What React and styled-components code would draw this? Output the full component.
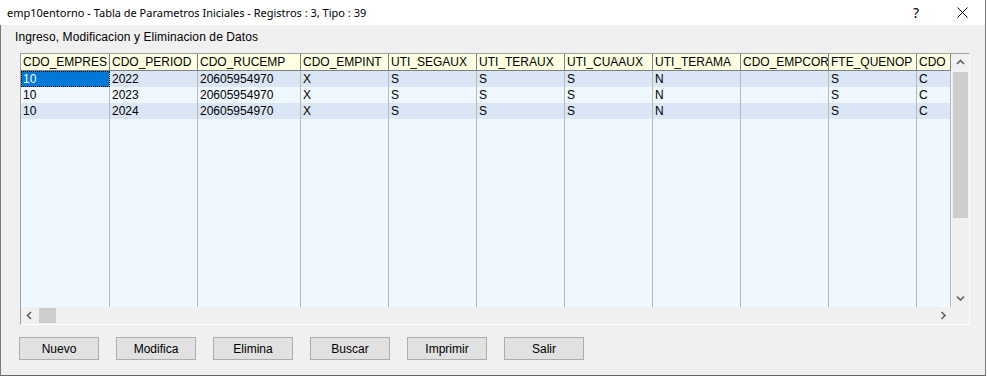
import React from 'react'
import styled, { createGlobalStyle } from 'styled-components'

const GlobalStyle = createGlobalStyle`
  body {
    margin: 0;
    background: #ffffff;
    font-family: "Liberation Sans", Arial, sans-serif;
  }
  * { box-sizing: border-box; }
`

const columns = [
  { name: 'CDO_EMPRES', width: 89 },
  { name: 'CDO_PERIOD', width: 88 },
  { name: 'CDO_RUCEMP', width: 103 },
  { name: 'CDO_EMPINT', width: 88 },
  { name: 'UTI_SEGAUX', width: 88 },
  { name: 'UTI_TERAUX', width: 88 },
  { name: 'UTI_CUAAUX', width: 88 },
  { name: 'UTI_TERAMA', width: 88 },
  { name: 'CDO_EMPCOR', width: 88 },
  { name: 'FTE_QUENOP', width: 88 },
  { name: 'CDO', width: 34 },
]

const rows = [
  ['10', '2022', '20605954970', 'X', 'S', 'S', 'S', 'N', '', 'S', 'C'],
  ['10', '2023', '20605954970', 'X', 'S', 'S', 'S', 'N', '', 'S', 'C'],
  ['10', '2024', '20605954970', 'X', 'S', 'S', 'S', 'N', '', 'S', 'C'],
]

const buttons = ['Nuevo', 'Modifica', 'Elimina', 'Buscar', 'Imprimir', 'Salir']

const Window = styled.div`
  width: 986px;
  height: 376px;
  display: flex;
  flex-direction: column;
  border-right: 1px solid #7a7a7a;
`

const TitleBar = styled.div`
  height: 25px;
  flex-shrink: 0;
  background: #ffffff;
  display: flex;
  align-items: center;
  padding-left: 7px;
  font-family: "Noto Sans", "Open Sans", sans-serif;
  font-size: 11px;
  color: #000;
`

const TitleText = styled.span`
  flex: 1;
  white-space: nowrap;
`

const CaptionButton = styled.div`
  width: 46px;
  height: 25px;
  display: flex;
  align-items: center;
  justify-content: center;
  font-family: "Noto Sans", sans-serif;
  font-size: 14px;
  color: #000;
`

const Body = styled.div`
  flex: 1;
  background: #f0f0f0;
  border-left: 1px solid #7a7a7a;
  border-bottom: 1px solid #646464;
  padding-top: 4px;
  display: flex;
  flex-direction: column;
`

const GroupLabel = styled.div`
  margin-left: 14px;
  height: 16px;
  line-height: 16px;
  font-size: 12px;
  letter-spacing: 0.1px;
  color: #000;
`

const GridFrame = styled.div`
  margin: 8px 0 0 19px;
  width: 950px;
  height: 272px;
  border-top: 1px solid #a0a0a0;
  border-left: 1px solid #a0a0a0;
  border-right: 1px solid #ffffff;
  border-bottom: 1px solid #ffffff;
  display: flex;
  flex-direction: column;
`

const GridMain = styled.div`
  display: flex;
  height: 253px;
`

const DataArea = styled.div`
  width: 931px;
  display: flex;
  overflow: hidden;
  background: #f0f8ff;
`

const Column = styled.div`
  width: ${(p) => p.$width}px;
  flex-shrink: 0;
  display: flex;
  flex-direction: column;
`

const HeaderCell = styled.div`
  height: 17px;
  line-height: 16px;
  padding-left: 2px;
  background: #ffffe1;
  border-right: 1px solid #808080;
  border-bottom: 1px solid #808080;
  box-shadow: inset 1px 0 0 #ffffff;
  font-size: 12px;
  color: #000;
  white-space: nowrap;
  overflow: hidden;
`

const Cell = styled.div`
  height: 16px;
  line-height: 16px;
  padding-left: 2px;
  font-size: 12px;
  white-space: nowrap;
  overflow: hidden;
  border-right: 1px solid #b9b9b9;
  background: ${(p) => (p.$selected ? '#0078d7' : p.$row % 2 === 0 ? '#dae5f6' : '#f0f8ff')};
  color: ${(p) => (p.$selected ? '#ffffff' : '#000000')};
  outline: ${(p) => (p.$selected ? '1px dotted #000' : 'none')};
  outline-offset: -1px;
`

const Filler = styled.div`
  flex: 1;
  border-right: 1px solid #b9b9b9;
`

const VScroll = styled.div`
  width: 17px;
  background: #f0f0f0;
  display: flex;
  flex-direction: column;
`

const ArrowBox = styled.div`
  width: 17px;
  height: 17px;
  flex-shrink: 0;
  display: flex;
  align-items: center;
  justify-content: center;
`

const VThumb = styled.div`
  margin: 1px 1px 0 1px;
  height: 146px;
  background: #cdcdcd;
`

const VTrack = styled.div`
  flex: 1;
`

const HScroll = styled.div`
  height: 17px;
  display: flex;
  background: #f0f0f0;
`

const HTrack = styled.div`
  width: 931px;
  display: flex;
  align-items: stretch;
`

const HThumb = styled.div`
  width: 17px;
  margin: 1px 0 1px 1px;
  background: #cdcdcd;
`

const HSpace = styled.div`
  flex: 1;
`

const ButtonRow = styled.div`
  margin: 12px 0 0 18px;
  display: flex;
  gap: 17px;
`

const Button = styled.button`
  width: 80px;
  height: 23px;
  padding: 0;
  background: #e1e1e1;
  border: 1px solid #adadad;
  font-family: "Liberation Sans", Arial, sans-serif;
  font-size: 12px;
  color: #000;
`

const Chevron = ({ dir }) => {
  const pts = {
    up: '1,5 4.5,1.5 8,5',
    down: '1,1.5 4.5,5 8,1.5',
    left: '5,1 1.5,4.5 5,8',
    right: '1.5,1 5,4.5 1.5,8',
  }[dir]
  const vertical = dir === 'up' || dir === 'down'
  return (
    <svg width={vertical ? 9 : 7} height={vertical ? 7 : 9} viewBox={vertical ? '0 0 9 7' : '0 0 7 9'}>
      <polyline points={pts} fill="none" stroke="#606060" strokeWidth="1.6" />
    </svg>
  )
}

export default function App() {
  return (
    <>
      <GlobalStyle />
      <Window>
        <TitleBar>
          <TitleText>emp10entorno - Tabla de Parametros Iniciales - Registros : 3, Tipo : 39</TitleText>
          <CaptionButton>?</CaptionButton>
          <CaptionButton>
            <svg width="11" height="11" viewBox="0 0 11 11">
              <path d="M0.5 0.5 L10.5 10.5 M10.5 0.5 L0.5 10.5" stroke="#000" strokeWidth="1" />
            </svg>
          </CaptionButton>
        </TitleBar>
        <Body>
          <GroupLabel>Ingreso, Modificacion y Eliminacion de Datos</GroupLabel>
          <GridFrame>
            <GridMain>
              <DataArea>
                {columns.map((col, ci) => (
                  <Column key={col.name} $width={col.width}>
                    <HeaderCell>{col.name}</HeaderCell>
                    {rows.map((r, ri) => (
                      <Cell key={ri} $row={ri} $selected={ri === 0 && ci === 0}>
                        {r[ci]}
                      </Cell>
                    ))}
                    <Filler />
                  </Column>
                ))}
              </DataArea>
              <VScroll>
                <ArrowBox>
                  <Chevron dir="up" />
                </ArrowBox>
                <VThumb />
                <VTrack />
                <ArrowBox>
                  <Chevron dir="down" />
                </ArrowBox>
              </VScroll>
            </GridMain>
            <HScroll>
              <HTrack>
                <ArrowBox>
                  <Chevron dir="left" />
                </ArrowBox>
                <HThumb />
                <HSpace />
                <ArrowBox>
                  <Chevron dir="right" />
                </ArrowBox>
              </HTrack>
            </HScroll>
          </GridFrame>
          <ButtonRow>
            {buttons.map((b) => (
              <Button key={b}>{b}</Button>
            ))}
          </ButtonRow>
        </Body>
      </Window>
    </>
  )
}
